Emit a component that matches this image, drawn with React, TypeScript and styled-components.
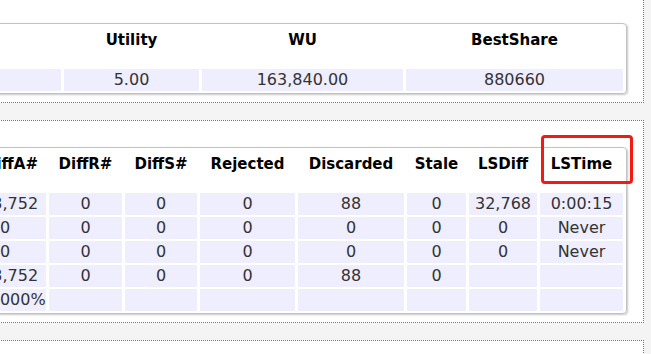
import styled, { createGlobalStyle } from "styled-components";

const GlobalStyle = createGlobalStyle`
  body {
    margin: 0;
    background: #f4f4f4;
    overflow: hidden;
    font-family: "DejaVu Sans", Verdana, sans-serif;
  }
`;

type Col = { title: string; width: number; indent?: number; mark?: boolean };

// the leading columns sit off the left edge of the view, so they are left blank
const summaryCols: Col[] = [
  { title: "", width: 170 },
  { title: "Utility", width: 135 },
  { title: "WU", width: 201 },
  { title: "BestShare", width: 217 },
];

const summaryRows = [["", "5.00", "163,840.00", "880660"]];

const poolCols: Col[] = [
  { title: "", width: 100 },
  { title: "DiffA#", width: 82, indent: 12 },
  { title: "DiffR#", width: 73 },
  { title: "DiffS#", width: 72 },
  { title: "Rejected", width: 95 },
  { title: "Discarded", width: 106 },
  { title: "Stale", width: 59 },
  { title: "LSDiff", width: 68 },
  { title: "LSTime", width: 83, mark: true },
];

const poolRows = [
  ["", "163,752", "0", "0", "0", "88", "0", "32,768", "0:00:15"],
  ["", "0", "0", "0", "0", "0", "0", "0", "Never"],
  ["", "0", "0", "0", "0", "0", "0", "0", "Never"],
  ["", "163,752", "0", "0", "0", "88", "0", "", ""],
  ["", "100.000%", "", "", "", "", "", "", ""],
];

const DataTable = ({ cols, rows }: { cols: Col[]; rows: string[][] }) => (
  <Table>
    <thead>
      <tr>
        {cols.map((c, i) => (
          <Head key={i} $w={c.width} $indent={c.indent ?? 0}>
            {c.title}
            {c.mark && <Mark />}
          </Head>
        ))}
      </tr>
    </thead>
    <tbody>
      {rows.map((r, i) => (
        <tr key={i}>
          {r.map((v, j) => (
            <Cell key={j}>{v}</Cell>
          ))}
        </tr>
      ))}
    </tbody>
  </Table>
);

export default function App() {
  return (
    <>
      <GlobalStyle />
      <Page>
        <Panel>
          <DataTable cols={summaryCols} rows={summaryRows} />
        </Panel>
        <Panel>
          <DataTable cols={poolCols} rows={poolRows} />
        </Panel>
        <Tail />
      </Page>
    </>
  );
}

const Page = styled.div`
  margin: -4px 0 0 -60px;
  width: 704px;
`;

const Panel = styled.section`
  display: flex;
  justify-content: flex-end;
  background: #fff;
  border: 1px dotted #777;
  padding: 26px 16px 8px;

  & + & {
    margin-top: 17px;
  }
`;

const Tail = styled.section`
  margin-top: 17px;
  height: 14px;
  background: #fff;
  border: 1px dotted #777;
  border-bottom: none;
`;

const Table = styled.table`
  flex-shrink: 0;
  border-collapse: separate;
  border-spacing: 3px 2px;
  border: 1px solid #c2c2c2;
  border-radius: 4px;
  box-shadow: 1px 1px 2px rgba(0, 0, 0, 0.22);
`;

const Head = styled.th<{ $w: number; $indent: number }>`
  position: relative;
  box-sizing: border-box;
  width: ${p => p.$w}px;
  height: 41px;
  padding: 5px 0 0 ${p => p.$indent}px;
  vertical-align: top;
  text-align: center;
  font-size: 15px;
  line-height: 18px;
  font-weight: bold;
  color: #000;
  white-space: nowrap;
`;

const Cell = styled.td`
  box-sizing: border-box;
  height: 22px;
  padding: 0;
  background: #eeeeff;
  text-align: center;
  vertical-align: middle;
  font-size: 16px;
  line-height: 20px;
  color: #333;
  white-space: nowrap;
`;

const Mark = styled.span`
  position: absolute;
  left: 1px;
  top: -15px;
  width: 92px;
  height: 49px;
  box-sizing: border-box;
  border: 3px solid #f5190f;
  border-radius: 4px;
  pointer-events: none;
`;
